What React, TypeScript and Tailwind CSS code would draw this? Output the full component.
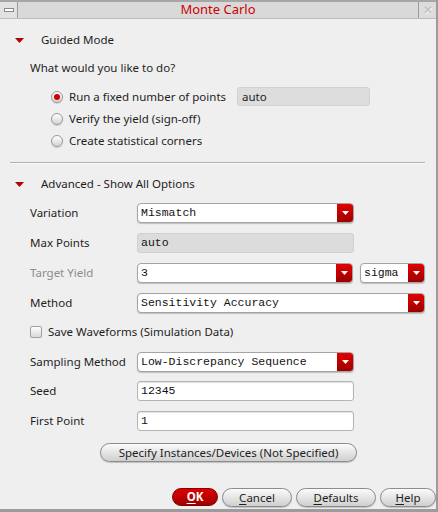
import React from "react";

const sans = "font-['Noto_Sans',sans-serif]";
const mono = "font-['Liberation_Mono',monospace]";

function Caret() {
    return (
        <svg width="9" height="5" viewBox="0 0 9 5" className="shrink-0">
            <path d="M0 0 H9 L4.5 5 Z" fill="#b80000" />
        </svg>
    );
}

function Section({ title }: { title: string }) {
    return (
        <div className="flex items-center h-[20px]">
            <div className="w-[41px] pl-[15px] flex items-center">
                <Caret />
            </div>
            <span className="text-[11.5px] text-[#1e1e1e]">{title}</span>
        </div>
    );
}

function Radio({ checked, label }: { checked?: boolean; label: string }) {
    return (
        <div className="flex items-center">
            <div className="w-[12px] h-[12px] rounded-full border border-[#9a9a9a] bg-gradient-to-b from-[#ffffff] to-[#d4d4d4] flex items-center justify-center shadow-[0_1px_1px_rgba(0,0,0,0.15)]">
                {checked && <div className="w-[6px] h-[6px] rounded-full bg-[#d00000]" />}
            </div>
            <span className="ml-[6px] text-[11.5px] text-[#1e1e1e]">{label}</span>
        </div>
    );
}

function Select({ value, className }: { value: string; className: string }) {
    return (
        <div className={`flex h-[20px] rounded-[4px] border border-[#a4a4a4] bg-white overflow-hidden shadow-[0_1px_1px_rgba(0,0,0,0.2)] ${className}`}>
            <div className={`flex-1 flex items-center pl-[3px] text-[11.5px] text-[#111] ${mono}`}>{value}</div>
            <div className="w-[16px] bg-gradient-to-b from-[#e20000] to-[#9c0000] flex items-center justify-center">
                <svg width="7" height="4" viewBox="0 0 7 4">
                    <path d="M0 0 H7 L3.5 4 Z" fill="#ffffff" />
                </svg>
            </div>
        </div>
    );
}

function Field({ value, disabled }: { value: string; disabled?: boolean }) {
    return (
        <div
            className={`w-[217px] h-[20px] rounded-[3px] border flex items-center pl-[3px] text-[11.5px] text-[#111] ${mono} ${
                disabled ? "bg-[#dcdcdc] border-[#d0d0d0]" : "bg-white border-[#b4b4b4] shadow-[inset_0_1px_1px_rgba(0,0,0,0.12)]"
            }`}
        >
            {value}
        </div>
    );
}

function Row({ label, dim, children }: { label: string; dim?: boolean; children: React.ReactNode }) {
    return (
        <div className="flex items-center h-[20px]">
            <span className={`w-[107px] text-[11.5px] ${dim ? "text-[#8c8c8c]" : "text-[#1e1e1e]"}`}>{label}</span>
            {children}
        </div>
    );
}

function Button({ children, className }: { children: React.ReactNode; className: string }) {
    return (
        <div
            className={`h-[19px] rounded-full border border-[#8c8c8c] bg-gradient-to-b from-[#fbfbfb] to-[#cfcfcf] flex items-center justify-center text-[11.5px] text-[#1e1e1e] shadow-[0_1px_1px_rgba(0,0,0,0.2)] ${className}`}
        >
            {children}
        </div>
    );
}

export default function App() {
    return (
        <div className={`w-[438px] h-[512px] bg-[#efefef] flex flex-col border-r-[2px] border-b-[3px] border-[#9c9c9c] ${sans}`}>
            {/* title bar */}
            <div className="h-[19px] flex border-t-[2px] border-[#a6a6a6] bg-[#d9d9d9] border-b border-b-[#bdbdbd]">
                <div className="w-[18px] border-r border-[#9c9c9c] bg-[#e2e2e2] flex items-center justify-center">
                    <div className="w-[10px] h-[4px] border border-[#8a8a8a] bg-white" />
                </div>
                <div className="flex-1 flex items-center justify-center text-[13px] text-[#d00000]">Monte Carlo</div>
                <div className="w-[18px] border-l border-[#9c9c9c] bg-[#dcdcdc] flex items-center justify-center text-[12px] text-[#bdbdbd] leading-none [text-shadow:1px_1px_0_#f6f6f6]">
                    ✕
                </div>
            </div>

            <div className="mt-[11px]">
                <Section title="Guided Mode" />
            </div>
            <div className="mt-[8px] pl-[30px] h-[20px] flex items-center text-[11.5px] text-[#1e1e1e]">
                What would you like to do?
            </div>

            <div className="mt-[7px] pl-[51px] flex flex-col">
                <div className="h-[23px] flex items-center">
                    <div className="w-[186px]">
                        <Radio checked label="Run a fixed number of points" />
                    </div>
                    <div className="w-[133px] h-[19px] rounded-[3px] bg-[#dddddd] border border-[#d2d2d2] flex items-center pl-[4px] text-[11.5px] text-[#1e1e1e]">
                        auto
                    </div>
                </div>
                <div className="h-[22px] flex items-center">
                    <Radio label="Verify the yield (sign-off)" />
                </div>
                <div className="h-[22px] flex items-center">
                    <Radio label="Create statistical corners" />
                </div>
            </div>

            <div className="mt-[10px] mx-[10px] w-[415px] h-[2px] border-t border-[#b0b0b0] border-b border-b-[#fafafa]" />

            <div className="mt-[10px]">
                <Section title="Advanced - Show All Options" />
            </div>

            <div className="pl-[30px] flex flex-col">
                <div className="mt-[9px]">
                    <Row label="Variation">
                        <Select value="Mismatch" className="w-[217px]" />
                    </Row>
                </div>
                <div className="mt-[10px]">
                    <Row label="Max Points">
                        <Field value="auto" disabled />
                    </Row>
                </div>
                <div className="mt-[10px]">
                    <Row label="Target Yield" dim>
                        <Select value="3" className="w-[216px]" />
                        <Select value="sigma" className="ml-[7px] w-[65px]" />
                    </Row>
                </div>
                <div className="mt-[10px]">
                    <Row label="Method">
                        <Select value="Sensitivity Accuracy" className="w-[288px]" />
                    </Row>
                </div>
                <div className="mt-[9px] h-[20px] flex items-center">
                    <div className="w-[12px] h-[12px] rounded-[2px] border border-[#a0a0a0] bg-gradient-to-b from-[#ffffff] to-[#d8d8d8]" />
                    <span className="ml-[6px] text-[11.5px] text-[#1e1e1e]">Save Waveforms (Simulation Data)</span>
                </div>
                <div className="mt-[10px]">
                    <Row label="Sampling Method">
                        <Select value="Low-Discrepancy Sequence" className="w-[217px]" />
                    </Row>
                </div>
                <div className="mt-[9px]">
                    <Row label="Seed">
                        <Field value="12345" />
                    </Row>
                </div>
                <div className="mt-[10px]">
                    <Row label="First Point">
                        <Field value="1" />
                    </Row>
                </div>
            </div>

            <div className="mt-[12px] pl-[100px]">
                <Button className="w-[257px]">Specify Instances/Devices (Not Specified)</Button>
            </div>

            <div className="mt-[26px] flex pl-[172px] gap-[4px]">
                <div className="w-[46px] h-[18px] rounded-full border border-[#800000] bg-gradient-to-b from-[#e00000] to-[#a00000] flex items-center justify-center text-[11.5px] font-bold text-white">
                    <span className="underline underline-offset-2">O</span>K
                </div>
                <Button className="w-[70px]">
                    <span className="underline underline-offset-2">C</span>ancel
                </Button>
                <Button className="w-[80px]">
                    <span className="underline underline-offset-2">D</span>efaults
                </Button>
                <Button className="w-[56px]">
                    <span className="underline underline-offset-2">H</span>elp
                </Button>
            </div>
        </div>
    );
}
